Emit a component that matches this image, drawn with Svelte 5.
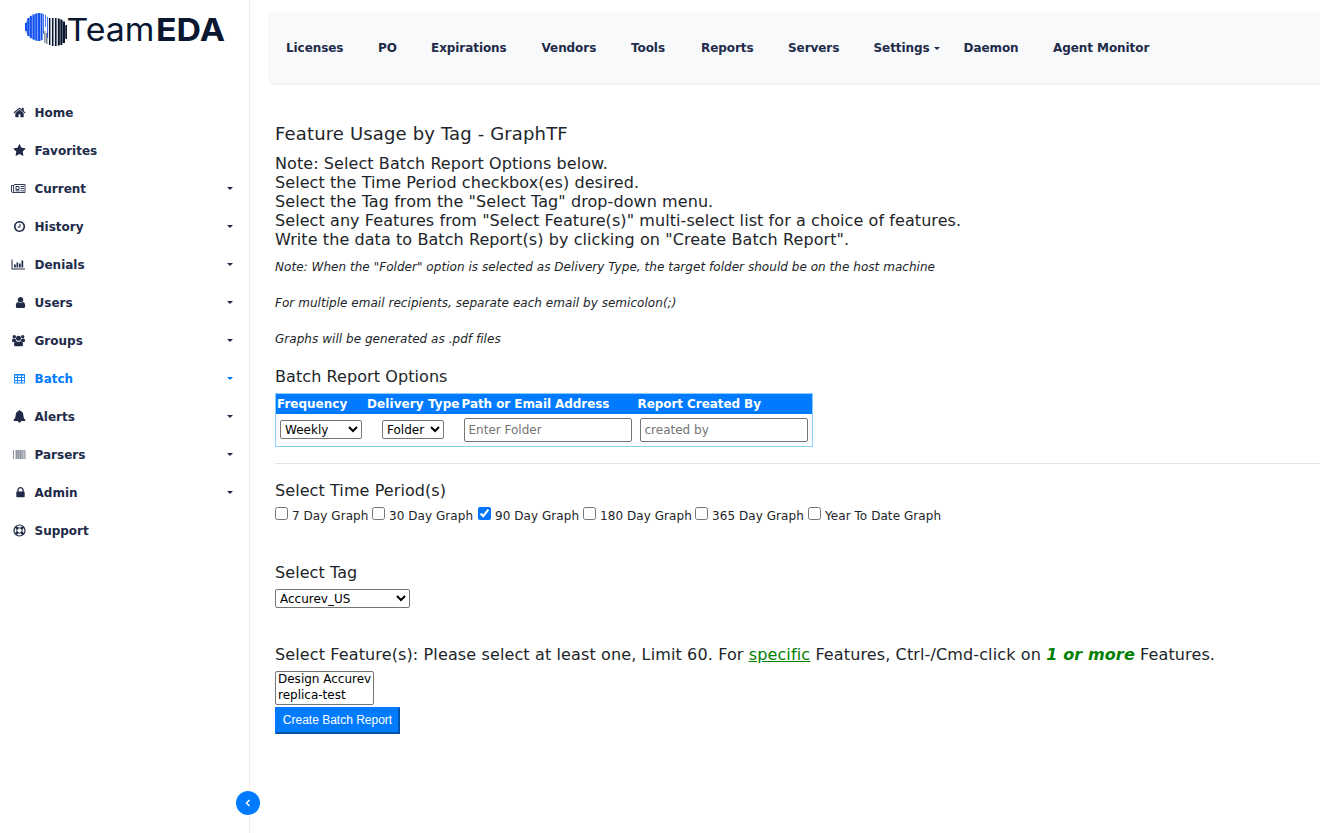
<script>
  const menu = [
    { label: 'Home', icon: 'home' },
    { label: 'Favorites', icon: 'star' },
    { label: 'Current', icon: 'news', sub: true },
    { label: 'History', icon: 'clock', sub: true },
    { label: 'Denials', icon: 'chart', sub: true },
    { label: 'Users', icon: 'user', sub: true },
    { label: 'Groups', icon: 'group', sub: true },
    { label: 'Batch', icon: 'table', sub: true, active: true },
    { label: 'Alerts', icon: 'bell', sub: true },
    { label: 'Parsers', icon: 'barcode', sub: true },
    { label: 'Admin', icon: 'lock', sub: true },
    { label: 'Support', icon: 'ring' }
  ];
  const nav = [
    ['Licenses', 92], ['PO', 53], ['Expirations', 110.5], ['Vendors', 89.5], ['Tools', 70],
    ['Reports', 87], ['Servers', 85.5], ['Settings', 90, true], ['Daemon', 89.5], ['Agent Monitor', 100]
  ];
  let periods = $state([
    { label: '7 Day Graph', on: false, w: 97 },
    { label: '30 Day Graph', on: false, w: 106 },
    { label: '90 Day Graph', on: true, w: 105 },
    { label: '180 Day Graph', on: false, w: 112 },
    { label: '365 Day Graph', on: false, w: 113 },
    { label: 'Year To Date Graph', on: false, w: 140 }
  ]);
  const blueBars = [[25,23,31,2],[27.3,18,36,2],[30,16,38,1.8],[32.8,14.5,39.5,1.8],[35.4,13.5,40.5,1.6],[38,13,41,2],[41,13.5,40,1],[43,14,34,.8],[45,15,27,.8],[47.2,17,38,.9]];
  const darkBars = [[44.6,31,43,.7],[46.5,33,44,.8],[49,18,45,1.4],[51.9,18,46,1.6],[54.9,18,46,1.7],[57.8,18.5,45.5,1.9],[60.5,19.5,45,1.9],[63,21.5,43,2],[65.5,25,39,1.5]];
</script>

{#snippet icon(name)}
  {#if name === 'home'}
    <svg viewBox="0 0 1792 1792"><path d="M1472 992v480q0 26-19 45t-45 19h-384v-384h-256v384h-384q-26 0-45-19t-19-45v-480q0-1 .5-3t.5-3l575-474 575 474q1 2 1 6zm223-69l-62 74q-8 9-21 11h-3q-13 0-21-7l-692-577-692 577q-12 8-24 7-13-2-21-11l-62-74q-8-10-7-23.5t11-21.5l719-599q32-26 76-26t76 26l244 204v-195q0-14 9-23t23-9h192q14 0 23 9t9 23v408l219 182q10 8 11 21.5t-7 23.5z"/></svg>
  {:else if name === 'star'}
    <svg viewBox="0 0 1792 1792"><path d="M1728 647q0 22-26 48l-363 354 86 500q1 7 1 20 0 21-10.5 35.5t-30.5 14.5q-19 0-40-12l-449-236-449 236q-22 12-40 12-21 0-31.5-14.5t-10.5-35.5q0-6 2-20l86-500-364-354q-25-27-25-48 0-37 56-46l502-73 225-455q19-41 49-41t49 41l225 455 502 73q56 9 56 46z"/></svg>
  {:else if name === 'clock'}
    <svg viewBox="0 0 1792 1792"><path d="M1024 544v448q0 14-9 23t-23 9h-320q-14 0-23-9t-9-23v-64q0-14 9-23t23-9h224v-352q0-14 9-23t23-9h64q14 0 23 9t9 23zm416 352q0-148-73-273t-198-198-273-73-273 73-198 198-73 273 73 273 198 198 273 73 273-73 198-198 73-273zm224 0q0 209-103 385.5t-279.5 279.5-385.5 103-385.5-103-279.5-279.5-103-385.5 103-385.5 279.5-279.5 385.5-103 385.5 103 279.5 279.5 103 385.5z"/></svg>
  {:else if name === 'user'}
    <svg class="right" viewBox="0 0 1792 1792"><path d="M1536 1399q0 109-62.5 187t-150.5 78h-854q-88 0-150.5-78t-62.5-187q0-85 8.5-160.5t31.5-152 58.5-131 94-89 134.5-34.5q131 128 313 128t313-128q76 0 134.5 34.5t94 89 58.5 131 31.5 152 8.5 160.5zm-256-887q0 159-112.5 271.5t-271.5 112.5-271.5-112.5-112.5-271.5 112.5-271.5 271.5-112.5 271.5 112.5 112.5 271.5z"/></svg>
  {:else if name === 'lock'}
    <svg class="right" viewBox="0 0 1792 1792"><path d="M640 768h512v-192q0-106-75-181t-181-75-181 75-75 181v192zm832 96v576q0 40-28 68t-68 28h-960q-40 0-68-28t-28-68v-576q0-40 28-68t68-28h32v-192q0-184 132-316t316-132 316 132 132 316v192h32q40 0 68 28t28 68z"/></svg>
  {:else if name === 'news'}
    <svg class="wide" viewBox="0 0 15 13"><path fill="none" stroke="currentColor" stroke-width=".9" d="M3 2.500h11v8H1.800q-1.300 0-1.300-1.300V3.500H3M2.600 3v6.200q0 1-.8 1.300"/><path fill="none" stroke="currentColor" stroke-width=".9" d="M5 4.500h3v3H5zM9.500 4.500H13M9.500 6.500H13M9.500 8.800H13M4.500 8.900H8.500"/></svg>
  {:else if name === 'chart'}
    <svg class="wide" viewBox="0 0 15 13"><path d="M.5 1.500h1v9H14v1H.5zM3 6.500h1.800v3H3zM5.500 4.500h1.700v5H5.500zM8 5.500h1.700v4H8zM10.500 2.500h1.700v7h-1.700z"/></svg>
  {:else if name === 'group'}
    <svg class="wide" viewBox="0 0 15 13"><circle cx="3.300" cy="2.700" r="1.700"/><circle cx="11.700" cy="2.700" r="1.700"/><circle cx="7.500" cy="4.300" r="2.500"/><path d="M1 6.800q0-2.300 1.400-2.300 1 .7 2.100.3.200 1.400 1 2.200-1.300.1-2 1H2q-1 0-1-1.200zM14 6.800q0-2.300-1.400-2.300-1 .7-2.100.3-.2 1.400-1 2.200 1.300.1 2 1H13q1 0 1-1.200zM3 10.700Q3 7 5.200 7q2.300 1.700 4.600 0Q12 7 12 10.700q0 1.500-1.500 1.500h-6Q3 12.200 3 10.700z"/></svg>
  {:else if name === 'table'}
    <svg viewBox="0 0 13 13"><path fill="none" stroke="currentColor" stroke-width=".9" d="M1.500 2.500h10v8.500h-10zM1 3h11M1.500 5.500h10M1.500 8.500h10M4.500 2.500v8.500M8.500 2.500v8.500"/></svg>
  {:else if name === 'bell'}
    <svg viewBox="0 0 13 13"><path d="M6.500 0q.8 0 .8.900Q10.300 1.600 10.300 5q0 3.500 2.200 5 0 .9-.9.900H8.200q-.2 1.500-1.700 1.500T4.800 10.900H1.400q-.9 0-.9-.9 2.200-1.500 2.200-5 0-3.400 3-4.100Q5.700 0 6.500 0z"/></svg>
  {:else if name === 'barcode'}
    <svg viewBox="0 0 13 13"><path fill="#8d93a0" d="M0 2h1v9H0zM2 2h.5v9H2zM3 2h1.800v9H3zM5 2h1.400v9H5zM6.700 2h1.900v9H6.700zM8.800 2h1v9h-1zM10.200 2h.6v9h-.6zM11.300 2h1.200v9h-1.200z"/></svg>
  {:else}
    <svg viewBox="0 0 13 13"><circle cx="6.500" cy="6.500" r="5.500" fill="none" stroke="currentColor" stroke-width="1.200"/><circle cx="6.500" cy="6.500" r="2.700" fill="none" stroke="currentColor"/><path fill="none" stroke="currentColor" stroke-width="2.600" d="M2.800 2.800l2 2M10.200 2.800l-2 2M2.800 10.200l2-2M10.200 10.200l-2-2"/></svg>
  {/if}
{/snippet}

<div class="page">
  <aside>
    <svg class="logo" width="249" height="60" viewBox="0 0 249 60">
      <path d="M25 27a14.500 14 0 0 1 18-13.500V40Q39 42 34 40 26 37 25 27z" fill="#7fa1f7" />
      <path d="M58 18.500q8 2 9 13.500-1 11-9 13.500z" fill="#8b929b" />
      {#each blueBars as [x, a, b, w]}<rect {x} y={a} width={w} height={b - a} fill="#1452f0" />{/each}
      {#each darkBars as [x, a, b, w]}<rect {x} y={a} width={w} height={b - a} fill="#0a1730" />{/each}
      <text x="66.500" y="41" textLength="88" lengthAdjust="spacingAndGlyphs">Team</text>
      <text x="156" y="41" textLength="69" lengthAdjust="spacingAndGlyphs" class="bold">EDA</text>
    </svg>
    <ul>
      {#each menu as m}
        <li class:active={m.active}>
          <span class="icon">{@render icon(m.icon)}</span>
          <span class="label">{m.label}</span>
          {#if m.sub}<i class="caret"></i>{/if}
        </li>
      {/each}
    </ul>
    <button class="collapse" aria-label="Collapse"><svg width="6" height="8" viewBox="0 0 6 8"><path d="M4.500 1L1.500 4l3 3" fill="none" stroke="#fff" stroke-width="1.400"/></svg></button>
  </aside>

  <main>
    <nav>
      {#each nav as [label, w, sub]}
        <a style:width="{w}px">{label}{#if sub}<i class="caret"></i>{/if}</a>
      {/each}
    </nav>
    <section>
      <h1>Feature Usage by Tag - GraphTF</h1>
      <h2 class="intro">Note: Select Batch Report Options below.<br />Select the Time Period checkbox(es) desired.<br />Select the Tag from the "Select Tag" drop-down menu.<br />Select any Features from "Select Feature(s)" multi-select list for a choice of features.<br />Write the data to Batch Report(s) by clicking on "Create Batch Report".</h2>
      <div class="notes">
        <em>Note: When the "Folder" option is selected as Delivery Type, the target folder should be on the host machine</em>
        <em>For multiple email recipients, separate each email by semicolon(;)</em>
        <em>Graphs will be generated as .pdf files</em>
      </div>
      <h2>Batch Report Options</h2>
      <div class="options">
        <div class="row head"><b>Frequency</b><b>Delivery Type</b><b>Path or Email Address</b><b>Report Created By</b></div>
        <div class="row body">
          <div><select class="freq"><option>Weekly</option></select></div>
          <div><select class="deliv"><option>Folder</option></select></div>
          <div><input type="text" placeholder="Enter Folder" /></div>
          <div><input type="text" placeholder="created by" /></div>
        </div>
      </div>
      <hr />
      <h2 class="tight">Select Time Period(s)</h2>
      <div class="periods">
        {#each periods as p}
          <label style:width="{p.w}px"><input type="checkbox" bind:checked={p.on} /><span>{p.label}</span></label>
        {/each}
      </div>
      <h2 class="tight">Select Tag</h2>
      <select class="tag"><option>Accurev_US</option></select>
      <h2 class="features tight">Select Feature(s): Please select at least one, Limit 60. For <u>specific</u> Features, Ctrl-/Cmd-click on <strong>1 or more</strong> Features.</h2>
      <select class="list" multiple size="2"><option>Design Accurev</option><option>replica-test</option></select>
      <button class="create">Create Batch Report</button>
    </section>
  </main>
</div>

<style>
  :global(body) { margin: 0; background: #fff; overflow: hidden; }
  * { box-sizing: border-box; }
  .page { display: flex; height: 833px; overflow: hidden; font: 12px/18px Verdana, "DejaVu Sans", sans-serif; color: #212529; }
  aside { position: relative; width: 250px; flex: none; border-right: 1px solid #ededf0; }
  .logo { display: block; }
  .logo text { font: 400 31.500px Inter, sans-serif; fill: #0a1730; }
  .logo text.bold { font-weight: 700; }
  ul { list-style: none; margin: 34px 0 0; padding: 0; }
  li { display: flex; align-items: center; height: 38px; padding: 0 16px 0 11px; color: #212b49; font-weight: 700; }
  li.active { color: #007bff; }
  .icon { width: 16px; margin-right: 7.500px; display: flex; justify-content: center; }
  .icon svg { display: block; width: 13px; height: 13px; margin-top: -1px; fill: currentColor; }
  .icon svg.wide { width: 15px; margin-left: -2px; }
  .icon svg.right { margin-left: 3px; }
  .label { flex: 1; }
  .caret { display: inline-block; border: 3px solid transparent; border-top-color: currentColor; border-bottom: 0; }
  li .caret { margin-top: -1px; }
  .collapse { position: absolute; left: 236px; top: 791px; width: 24px; height: 24px; padding: 0; border: 0; border-radius: 50%; background: #007bff; display: flex; align-items: center; justify-content: center; }
  main { flex: 1; min-width: 0; }
  nav { display: flex; align-items: center; height: 71px; margin: 12px 0 0 20px; padding-left: 16px; background: #f8f9fb; border-radius: 3px; box-shadow: 0 1px 3px rgba(0,0,0,.1); color: #212b49; font-weight: 700; letter-spacing: -.070px; white-space: nowrap; }
  nav a { flex: none; }
  nav .caret { margin-left: 4px; vertical-align: 2px; }
  section { padding: 40px 0 0 25px; }
  h1 { margin: 0 0 9px; font-size: 18px; font-weight: 400; line-height: 22px; letter-spacing: .150px; }
  h2 { margin: 0 0 8px; font-size: 16px; font-weight: 400; line-height: 19px; white-space: nowrap; letter-spacing: .08px; }
  h2.intro { margin-bottom: 9px; }
  h2.tight { margin-bottom: 7px; }
  .notes { display: flex; flex-direction: column; gap: 18px; margin-bottom: 19px; letter-spacing: .040px; white-space: nowrap; }
  .options { width: 538px; height: 54px; margin-top: -1px; border: 1px solid #87cefa; }
  .row { display: grid; grid-template-columns: 90px 95px 176px 175px; }
  .head { height: 20px; background: #007bff; color: #fff; line-height: 20px; white-space: nowrap; }
  .head b { padding-left: 1px; }
  .head b:nth-child(2) { letter-spacing: .08px; }
  .head b:nth-child(n+3) { padding-left: .5px; letter-spacing: -.070px; }
  .body { height: 32px; align-items: center; }
  .body div { padding-left: 3px; display: flex; }
  .body div:first-child { padding-left: 4px; }
  .body div:nth-child(2) { padding-left: 16px; }
  select, .body input { font: 12px Verdana, "DejaVu Sans", sans-serif; color: #000; background: #fff; border: 1px solid #767676; border-radius: 2px; margin: 0; }
  select { height: 19px; padding: 0; }
  .body select { margin-top: -1px; }
  .freq { width: 82px; }
  .deliv { width: 62px; }
  .body input { width: 168px; height: 24px; padding: 1px 3.500px; }
  .body input::placeholder { color: #757575; }
  hr { margin: 16px 0 17px; border: 0; border-top: 1px solid #e3e3e3; }
  .periods { display: flex; height: 18px; margin-bottom: 38px; letter-spacing: .06px; white-space: nowrap; }
  label { display: flex; }
  label input { width: 13px; height: 13px; margin: 0 4px 0 0; flex: none; accent-color: #0075ff; }
  .tag { display: block; width: 135px; }
  h2.features { margin-top: 37px; letter-spacing: .125px; }
  u { color: green; }
  strong { color: green; font-style: italic; }
  .list { display: block; width: 99px; height: 34px; overflow: hidden; }
  .list option { padding: 0 2px; height: 16px; min-height: 0; line-height: 16px; }
  .create { display: block; width: 125px; height: 27px; margin-top: 2px; padding: 0 0 2px; background: #007bff; border: 2px outset #007bff; border-top-color: #007bff; border-left-color: #007bff; color: #fff; font: 12px "Liberation Sans", Arial, sans-serif; white-space: nowrap; }
</style>
